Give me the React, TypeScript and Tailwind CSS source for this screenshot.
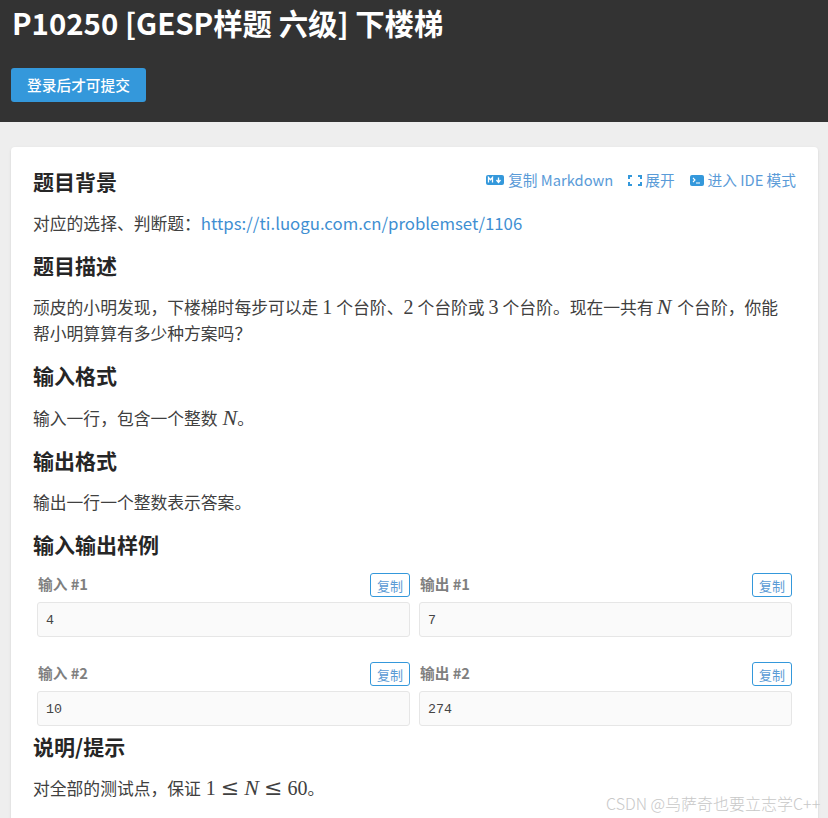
const samples = [
  { id: 1, input: '4', output: '7' },
  { id: 2, input: '10', output: '274' },
];

// margins differ per formula, the source has a space on some sides only
const MathN = ({ className }: { className: string }) => (
  <span className={`font-['Liberation_Serif',serif] italic text-[22px] leading-none ${className}`}>N</span>
);
const MathNum = ({ children, className }: { children: string; className: string }) => (
  <span className={`font-['Liberation_Serif',serif] text-[20px] leading-none ${className}`}>{children}</span>
);
const MathLeq = () => <span className="font-['DejaVu_Serif',serif] text-[22px] leading-none mx-[3px]">≤</span>;

const Heading = ({ children, className }: { children: string; className: string }) => (
  <h2 className={`text-[21px] leading-[30px] font-bold text-[#262626] ${className}`}>{children}</h2>
);

const SampleCell = ({ label, value }: { label: string; value: string }) => (
  <div className="flex-1 min-w-0">
    <div className="flex items-center justify-between h-6 pl-px">
      <span className="text-[14.7px] font-bold text-[#7f7f7f] -translate-y-px">{label}</span>
      <button className="w-10 h-6 border border-[#3498db] rounded-[3px] text-[13px] leading-none text-[#5b9bd5]">复制</button>
    </div>
    <pre className="mt-[5px] h-[35px] px-2 pt-[3px] flex items-center bg-[#fafafa] border border-[#e6e6e6] rounded-[3px] font-['Liberation_Mono',monospace] text-[13.3px] text-[#444]">
      {value}
    </pre>
  </div>
);

export default function App() {
  return (
    <div className="relative h-[818px] overflow-hidden bg-[#eeeeee] font-['Noto_Sans_CJK_SC','Noto_Sans',sans-serif]">
      <header className="h-[122px] bg-[#333333] pl-[11px] text-white">
        <h1 className="text-[29.4px] leading-[48px] font-bold pl-px -translate-y-[2px]">P10250 [GESP样题 六级] 下楼梯</h1>
        <button className="mt-5 w-[135px] h-[34px] rounded-[3px] bg-[#3498db] text-[14.7px] font-medium text-white">登录后才可提交</button>
      </header>

      <main className="mt-[25px] ml-[11px] w-[807px] min-h-[680px] rounded-t-[4px] bg-white px-[22px] pt-[19px] shadow-sm text-[16.8px] leading-[26px] text-[#404040]">
        <div className="flex items-center justify-between">
          <Heading className="">题目背景</Heading>
          <div className="flex items-center -translate-y-px text-[14.7px] text-[#5a9bd8]">
            <span className="flex items-center gap-1">
              <svg width="18" height="10" viewBox="0 0 18 10">
                <rect width="18" height="10" rx="2" fill="#3498db" />
                <path d="M2.5 7.5v-5l2 2.2 2-2.2v5M12.5 2.5v4M10.5 5l2 2.5 2-2.5" fill="none" stroke="#fff" strokeWidth="1.3" />
              </svg>
              复制 Markdown
            </span>
            <span className="flex items-center gap-[3px] ml-[15px]">
              <svg width="14" height="11" viewBox="0 0 14 11" fill="none" stroke="#3498db" strokeWidth="2">
                <path d="M1 4V1h3M10 1h3v3M13 7v3h-3M4 10H1V7" />
              </svg>
              展开
            </span>
            <span className="flex items-center gap-1 ml-[15px]">
              <svg width="14" height="11" viewBox="0 0 14 11">
                <rect width="14" height="11" rx="2" fill="#3498db" />
                <path d="M3 3l2 2-2 2M6 8h4" fill="none" stroke="#fff" strokeWidth="1.1" />
              </svg>
              进入 IDE 模式
            </span>
          </div>
        </div>

        <p className="mt-[14px]">
          对应的选择、判断题：<span className="text-[#3f8fd2]">https://ti.luogu.com.cn/problemset/1106</span>
        </p>

        <Heading className="mt-[14px]">题目描述</Heading>
        <p className="mt-[14px]">
          顽皮的小明发现，下楼梯时每步可以走<MathNum className="mx-[4px]">1</MathNum>个台阶、<MathNum className="mr-[4px]">2</MathNum>个台阶或<MathNum className="mx-[4px]">3</MathNum>个台阶。现在一共有<MathN className="ml-[3px] mr-[6px]" />个台阶，你能
          <br />
          帮小明算算有多少种方案吗？
        </p>

        <Heading className="mt-[14px]">输入格式</Heading>
        <p className="mt-[15px]">
          输入一行，包含一个整数<MathN className="ml-[5px]" />。
        </p>

        <Heading className="mt-[14px]">输出格式</Heading>
        <p className="mt-[14px]">输出一行一个整数表示答案。</p>

        <Heading className="mt-[14px]">输入输出样例</Heading>
        <div className="mt-[14px] px-1 flex flex-col gap-[25px]">
          {samples.map((s) => (
            <div key={s.id} className="flex gap-[9px]">
              <SampleCell label={`输入 #${s.id}`} value={s.input} />
              <SampleCell label={`输出 #${s.id}`} value={s.output} />
            </div>
          ))}
        </div>

        <Heading className="mt-[5px]">说明/提示</Heading>
        <p className="mt-[14px]">
          对全部的测试点，保证<MathNum className="ml-[5px] mr-[2px]">1</MathNum>
          <MathLeq />
          <MathN className="mx-[2px]" />
          <MathLeq />
          <MathNum className="ml-[2px]">60</MathNum>。
        </p>
      </main>

      <div className="absolute left-[606px] top-[793px] whitespace-nowrap text-[16px] leading-5 font-light text-[#c8c8c8]">CSDN @乌萨奇也要立志学C++</div>
    </div>
  );
}
